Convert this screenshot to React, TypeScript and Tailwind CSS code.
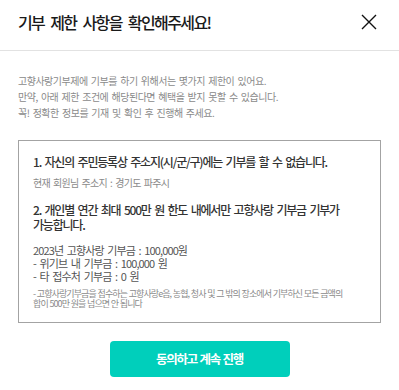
import React from 'react';

const font = { fontFamily: '"Noto Sans CJK KR", "Noto Sans", sans-serif' };

function CloseIcon() {
  return (
    <svg width="16" height="16" viewBox="0 0 16 16" fill="none" stroke="#111" strokeWidth="1.4">
      <path d="M1 1L15 15M15 1L1 15" />
    </svg>
  );
}

export default function App() {
  return (
    <div className="w-[399px] h-[390px] bg-white overflow-hidden" style={font}>
      <div className="h-[51px] flex items-center justify-between pl-[18px] pr-[22px] pb-[6px] border-b border-[#e2e2e2]">
        <h1 className="text-[16px] leading-[20px] font-medium tracking-[-0.1em] [word-spacing:4px] text-[#1a1a1a]">
          기부 제한 사항을 확인해주세요!
        </h1>
        <button className="w-[16px] h-[16px] flex items-center justify-center">
          <CloseIcon />
        </button>
      </div>

      <div className="px-[18px] pt-[22px]">
        <p className="text-[10px] leading-[16px] tracking-[-0.05em] [word-spacing:1.5px] text-[#8a8a8a]">
          고향사랑기부제에 기부를 하기 위해서는 몇가지 제한이 있어요.
          <br />
          만약, 아래 제한 조건에 해당된다면 혜택을 받지 못할 수 있습니다.
          <br />
          꼭! 정확한 정보를 기재 및 확인 후 진행해 주세요.
        </p>

        <div className="mt-[19px] border border-[#a3a3a3] px-[14px] pt-[13px] pb-[13px]">
          <p className="text-[12px] leading-[16px] font-medium tracking-[-0.1em] [word-spacing:2px] text-[#333]">
            1. 자신의 주민등록상 주소지(시/군/구)에는 기부를 할 수 없습니다.
          </p>
          <p className="mt-[6px] text-[10px] leading-[14px] tracking-[-0.07em] [word-spacing:1.5px] text-[#8a8a8a]">
            현재 회원님 주소지 : 경기도 파주시
          </p>

          <p className="mt-[12px] text-[12px] leading-[15px] font-medium tracking-[-0.1em] [word-spacing:2px] text-[#333]">
            2. 개인별 연간 최대 500만 원 한도 내에서만 고향사랑 기부금 기부가
            <br />
            가능합니다.
          </p>
          <div className="mt-[12px] text-[11px] leading-[13px] tracking-[-0.08em] [word-spacing:2px] text-[#555]">
            <p>2023년 고향사랑 기부금 : 100,000원</p>
            <p>- 위기브 내 기부금 : 100,000 원</p>
            <p>- 타 접수처 기부금 : 0 원</p>
          </div>
          <p className="mt-[6px] text-[9px] leading-[10px] tracking-[-0.1em] [word-spacing:0.5px] text-[#8a8a8a]">
            - 고향사랑기부금을 접수하는 고향사랑e음, 농협, 청사 및 그 밖의 장소에서 기부하신 모든 금액의
            <br />
            합이 500만 원을 넘으면 안 됩니다
          </p>
        </div>

        <div className="mt-[18px] flex justify-center">
          <button className="w-[180px] h-[36px] rounded-[4px] bg-[#00cfbb] text-white text-[12.5px] font-bold tracking-[-0.1em] [word-spacing:1px]">
            동의하고 계속 진행
          </button>
        </div>
      </div>
    </div>
  );
}
